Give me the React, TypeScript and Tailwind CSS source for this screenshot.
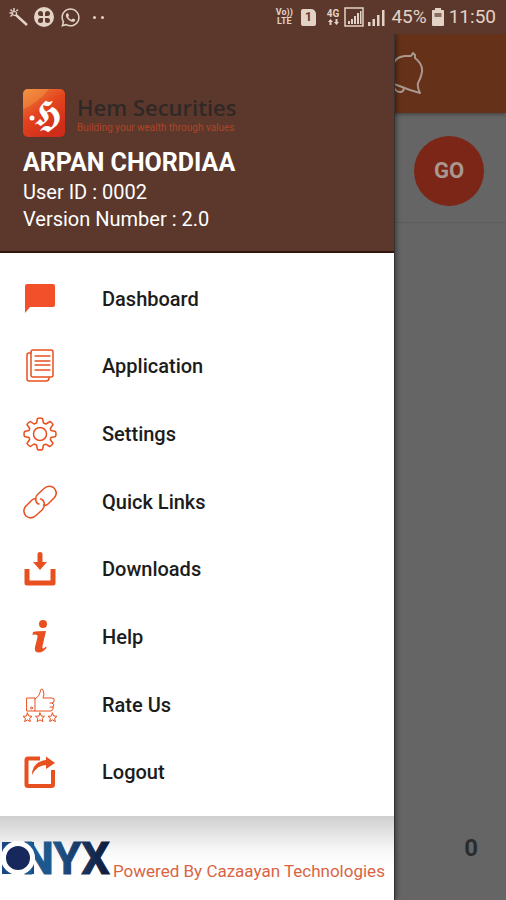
import type { ReactNode } from "react";
import { FaWhatsapp } from "react-icons/fa";

const ORANGE = "#e8501f";
const CREAM = "#e3d2c6";

function StatusBar() {
  return (
    <header className="relative z-20 flex h-[34px] items-center justify-between bg-[#5c382c] pr-[10px] pl-2 text-[#e3d2c6]">
      <div className="flex items-center gap-[6px]">
        <svg width="20" height="20" viewBox="0 0 20 20" fill="none" stroke={CREAM} aria-label="Magic wand">
          <path d="M8 8l11 10" strokeWidth="2.4" />
          <path d="M6 1v4M1.500 6h3M2.500 2.500l2 2M10 2.500L8.500 4M2.500 9.500l2-2" strokeWidth="1.500" />
          <circle cx="6.500" cy="6.500" r="2" strokeWidth="1.200" />
        </svg>
        <svg width="20" height="20" viewBox="0 0 20 20" aria-label="Four petals">
          <circle cx="10" cy="10" r="10" fill={CREAM} />
          <g fill="#5c382c">
            <path d="M9 9H6.500A2.500 2.500 0 1 1 9 6.500zM11 9V6.500A2.500 2.500 0 1 1 13.500 9zM9 11v2.500A2.500 2.500 0 1 1 6.500 11zM11 11h2.500A2.500 2.500 0 1 1 11 13.500z" />
          </g>
        </svg>
        <FaWhatsapp size={21} />
        <span className="flex gap-[5px] pl-[6px]">
          <i className="size-[3px] rounded-full bg-[#e3d2c6]" />
          <i className="size-[3px] rounded-full bg-[#e3d2c6]" />
        </span>
      </div>
      <div className="flex items-center gap-[5px]">
        <div className="pr-[3px] text-center text-[9px] leading-[9px] font-bold">
          <div>Vo))</div>
          <div>LTE</div>
        </div>
        <div className="mr-[6px] flex h-[17px] w-[15px] items-center justify-center rounded-[2px] rounded-tr-[5px] bg-[#e3d2c6] text-[12px] font-bold text-[#5c382c]">
          1
        </div>
        <div className="flex flex-col items-center text-[10px] leading-[10px] font-bold">
          <span>4G</span>
          <svg width="11" height="6" viewBox="0 0 11 6" fill={CREAM} aria-hidden="true">
            <path d="M0 3L2.500 0L5 3H3.500V6H1.500V3zM6 3L8.500 6L11 3H9.500V0H7.500V3z" />
          </svg>
        </div>
        <svg width="42" height="20" viewBox="0 0 42 20" fill={CREAM} aria-label="Signal strength">
          <path d="M1 1H19V19H1z" fill="none" stroke={CREAM} strokeWidth="1.500" />
          <path d="M4 14h2v3H4zM7 12h2v5H7zM10 9h2v8h-2zM13 6h2v11h-2zM16 4h1.500v13H16z" />
          <path d="M24 15h2.500v4H24zM28.500 12H31v7h-2.500zM33 8h2.500v11H33zM38 3h2.500v16H38z" />
        </svg>
        <span className="text-[19px]">45%</span>
        <svg width="12" height="18" viewBox="0 0 12 18" aria-label="Battery">
          <path d="M3 0h6v2h2.200q.8 0 .8.8V17q0 1-1 1H1q-1 0-1-1V2.800Q0 2 .8 2H3z" fill={CREAM} />
          <path d="M2.500 5h7v4h-7z" fill="#8b6d60" />
        </svg>
        <span className="text-[19px]">11:50</span>
      </div>
    </header>
  );
}

function Page() {
  return (
    <main className="col-start-1 row-start-1 flex flex-col bg-[#656565]">
      <div className="flex h-[79px] items-center justify-end bg-[#653119] pr-[80px] shadow-[0_1px_4px_rgba(0,0,0,0.4)]">
        <button aria-label="Notifications">
          <svg width="44" height="44" viewBox="0 0 44 44" fill="none" stroke="#aa978d" strokeWidth="2" strokeLinejoin="round">
            <path d="M3 29Q9 27 10 18Q11 5 23 4L29 4L31 1L33 3L33 6Q41 12 40 20Q39 26 36 31Q35 35 38 41L28 38L12 32Z" />
            <path d="M11 33Q14 41 19 40Q22 39 22 36" />
          </svg>
        </button>
      </div>
      <div className="flex h-[110px] items-center justify-end border-b border-[#5c5c5c] pt-[6px] pr-[22px]">
        <button className="size-[70px] rounded-full bg-[#7b2616] text-[22px] font-bold text-[#a8988f]">GO</button>
      </div>
      <div className="flex flex-1 items-end justify-end pr-[28px] pb-[36px] text-[24px] leading-[32px] font-bold text-[#292d30]">
        0
      </div>
    </main>
  );
}

function Icon({ children }: { children: ReactNode }) {
  return (
    <svg
      width="34"
      height="34"
      viewBox="0 0 34 34"
      fill="none"
      stroke={ORANGE}
      strokeWidth="1.500"
      strokeLinecap="round"
      strokeLinejoin="round"
      aria-hidden="true"
    >
      {children}
    </svg>
  );
}

const star = "l1.300 3 3.200.3-2.400 2.100.8 3.200-2.900-1.700-2.900 1.700.8-3.200-2.400-2.100 3.200-.3z";

const items: { label: string; icon: ReactNode }[] = [
  {
    label: "Dashboard",
    icon: <path d="M4 2H30Q32 2 32 4V23Q32 25 30 25H7L2 31V4Q2 2 4 2z" fill="#f2502a" stroke="none" />,
  },
  {
    label: "Application",
    icon: (
      <>
        <path d="M10 1H28Q30 1 30 3V26Q30 28 28 28H10Q8 28 8 26V3Q8 1 10 1z" />
        <path d="M8 4H6Q4 4 4 6V30Q4 32 6 32H23Q26 32 26 29" />
        <path d="M12 7H27M12 12H27M12 16H27M12 21H27" strokeWidth="1.300" />
      </>
    ),
  },
  {
    label: "Settings",
    icon: (
      <>
        <circle cx="17" cy="17" r="6.500" />
        <path d="M14.500 1.500Q17 .5 19.500 1.500L20.500 6L23 7L27 4.500Q29 5.500 30 7.500L27.300 11.500L28 13.500L32.500 14.500Q33.500 17 32.500 19.500L28 20.500L27.300 22.500L30 26.500Q29 28.500 26.500 29.500L23 27.200L20.500 28L19.500 32.500Q17 33.500 14.500 32.500L13.500 28L11 27L7.500 29.500Q5 28.500 4 26.500L6.700 22.500L6 20.500L1.500 19.500Q.5 17 1.500 14.500L6 13.500L6.700 11.500L4 7.500Q5 5.500 7.500 4.500L11 7L13.500 6z" />
      </>
    ),
  },
  {
    label: "Quick Links",
    icon: (
      <>
        <path d="M13.500 17Q11 13 15 9L21 3.500Q25-.5 30.500 2.500Q35.500 7 31.500 12.500L25 19Q23 21 20.500 20" />
        <path d="M20.500 16Q23 21 19 25L13 30.500Q8 35 3 31Q-1 26.500 2.500 21.500L9 15Q11 13 13 14" />
        <path d="M13.500 17Q14 19 16 19M20.500 16Q19 14 17.500 14" />
      </>
    ),
  },
  {
    label: "Downloads",
    icon: (
      <>
        <path d="M4 17V31H30V17" strokeWidth="5" strokeLinecap="butt" />
        <path d="M14.500 2Q14.500 0 17 0Q19.500 0 19.500 2V10H24L17 18L10 10H14.500z" fill={ORANGE} stroke="none" />
      </>
    ),
  },
  {
    label: "Help",
    icon: (
      <g fill={ORANGE} stroke="none">
        <circle cx="20" cy="4" r="4" />
        <path d="M10 12Q14 11 23 11L19.500 26Q19 29 20.500 28.500L23 26.500L23.500 28Q19 33 15 32.500Q11 32 12 27L14.500 17Q15 14.500 12 14.500L9.500 15z" />
      </g>
    ),
  },
  {
    label: "Rate Us",
    icon: (
      <g strokeWidth="1">
        <path d="M4 10H12V23H4zM12 11Q17 8 17.500 2Q18 0 20 2Q22 6 20 10H29Q32 10 31 13Q31 15 29 15Q32 16 30 19Q31 22 28 23H12M27 15H30M27 19H30" />
        <circle cx="8.500" cy="20" r="1" />
        <path d={"M4.500 25" + star + "M17 25" + star + "M29.500 25" + star} />
      </g>
    ),
  },
  {
    label: "Logout",
    icon: (
      <>
        <path d="M17 3.500H5Q3.500 3.500 3.500 5V29.500Q3.500 31 5 31H28.500Q30 31 30 29.500V15" strokeWidth="4" strokeLinecap="butt" />
        <path d="M9 20Q9 7 23 5V1.500L32 8L23 14V10Q14 10 9 20z" fill={ORANGE} stroke="none" />
      </>
    ),
  },
];

function Drawer() {
  return (
    <aside className="z-10 col-start-1 row-start-1 flex w-[78%] flex-col border-r border-[#333] bg-white shadow-[1px_0_5px_rgba(0,0,0,0.45)]">
      <div className="border-b-2 border-[#34160e] bg-[#5c382c] px-[23px] pt-[55px] pb-[18px] text-white">
        <div className="flex items-center gap-[12px]">
          <svg className="shrink-0" width="42" height="48" viewBox="0 0 42 48" role="img" aria-label="Hem Securities emblem">
            <defs>
              <linearGradient id="emblem" x1="0" y1="0" x2=".6" y2="1">
                <stop offset="0" stopColor="#f08a3e" />
                <stop offset=".5" stopColor="#e4451f" />
                <stop offset="1" stopColor="#cf2c1a" />
              </linearGradient>
            </defs>
            <rect width="42" height="48" rx="5" fill="url(#emblem)" />
            <path d="M0 20Q15 14 26 0H5Q0 0 0 5z" fill="#f6a14b" opacity=".4" />
            <circle cx="9" cy="29" r="2.500" fill="#fff" />
            <text x="24" y="37" textAnchor="middle" fontSize="38" fill="#fff" fontFamily="DejaVu Sans, sans-serif">
              𝕳
            </text>
          </svg>
          <div>
            <div className="font-['Open_Sans'] text-[22px] leading-[30px] font-semibold whitespace-nowrap text-[#302826]">
              Hem Securities
            </div>
            <div className="text-[10px] leading-[12px] whitespace-nowrap text-[#ad4429]">
              Building your wealth through values
            </div>
          </div>
        </div>
        <h1 className="pt-[10px] text-[25px] leading-[32px] font-bold">ARPAN CHORDIAA</h1>
        <p className="text-[20px] leading-[27px]">User ID : 0002</p>
        <p className="text-[20px] leading-[27px]">Version Number : 2.0</p>
      </div>
      <nav className="flex flex-1 flex-col pt-3 pb-[10px]">
        {items.map((item) => (
          <a
            key={item.label}
            href={"#" + item.label.toLowerCase().replace(" ", "-")}
            className="flex flex-1 items-center gap-[45px] px-[23px] text-[20px] font-medium text-[#1c1c1c]"
          >
            <Icon>{item.icon}</Icon>
            {item.label}
          </a>
        ))}
      </nav>
      <footer className="flex h-[84px] items-center bg-linear-to-b from-[#cfcfcf] via-[#f7f7f7] via-40% to-white to-60%">
        <svg className="shrink-0" width="113" height="60" viewBox="0 -12 113 60" role="img" aria-label="ONYX">
          <defs>
            <linearGradient id="onyx" gradientUnits="userSpaceOnUse" x1="20" y1="0" x2="110" y2="0">
              <stop offset="0" stopColor="#195b94" />
              <stop offset=".4" stopColor="#1d568b" />
              <stop offset=".7" stopColor="#17345f" />
              <stop offset="1" stopColor="#101a36" />
            </linearGradient>
          </defs>
          <path d="M2 2H34V34H2z" fill="#1a4788" />
          <text x="22" y="34" fontSize="45" fontWeight="bold" fill="url(#onyx)" stroke="url(#onyx)" fontFamily="Roboto, sans-serif">
            NYX
          </text>
          <circle cx="18" cy="18" r="14.500" fill="#17295c" stroke="#fff" strokeWidth="5" />
        </svg>
        <span className="pt-[26px] text-[17px] leading-[22px] whitespace-nowrap text-[#d96443]">
          Powered By Cazaayan Technologies
        </span>
      </footer>
    </aside>
  );
}

export default function App() {
  return (
    <div className="flex min-h-screen flex-col bg-[#656565] font-[Roboto,sans-serif]">
      <StatusBar />
      <div className="grid flex-1 grid-cols-1">
        <Page />
        <Drawer />
      </div>
    </div>
  );
}
